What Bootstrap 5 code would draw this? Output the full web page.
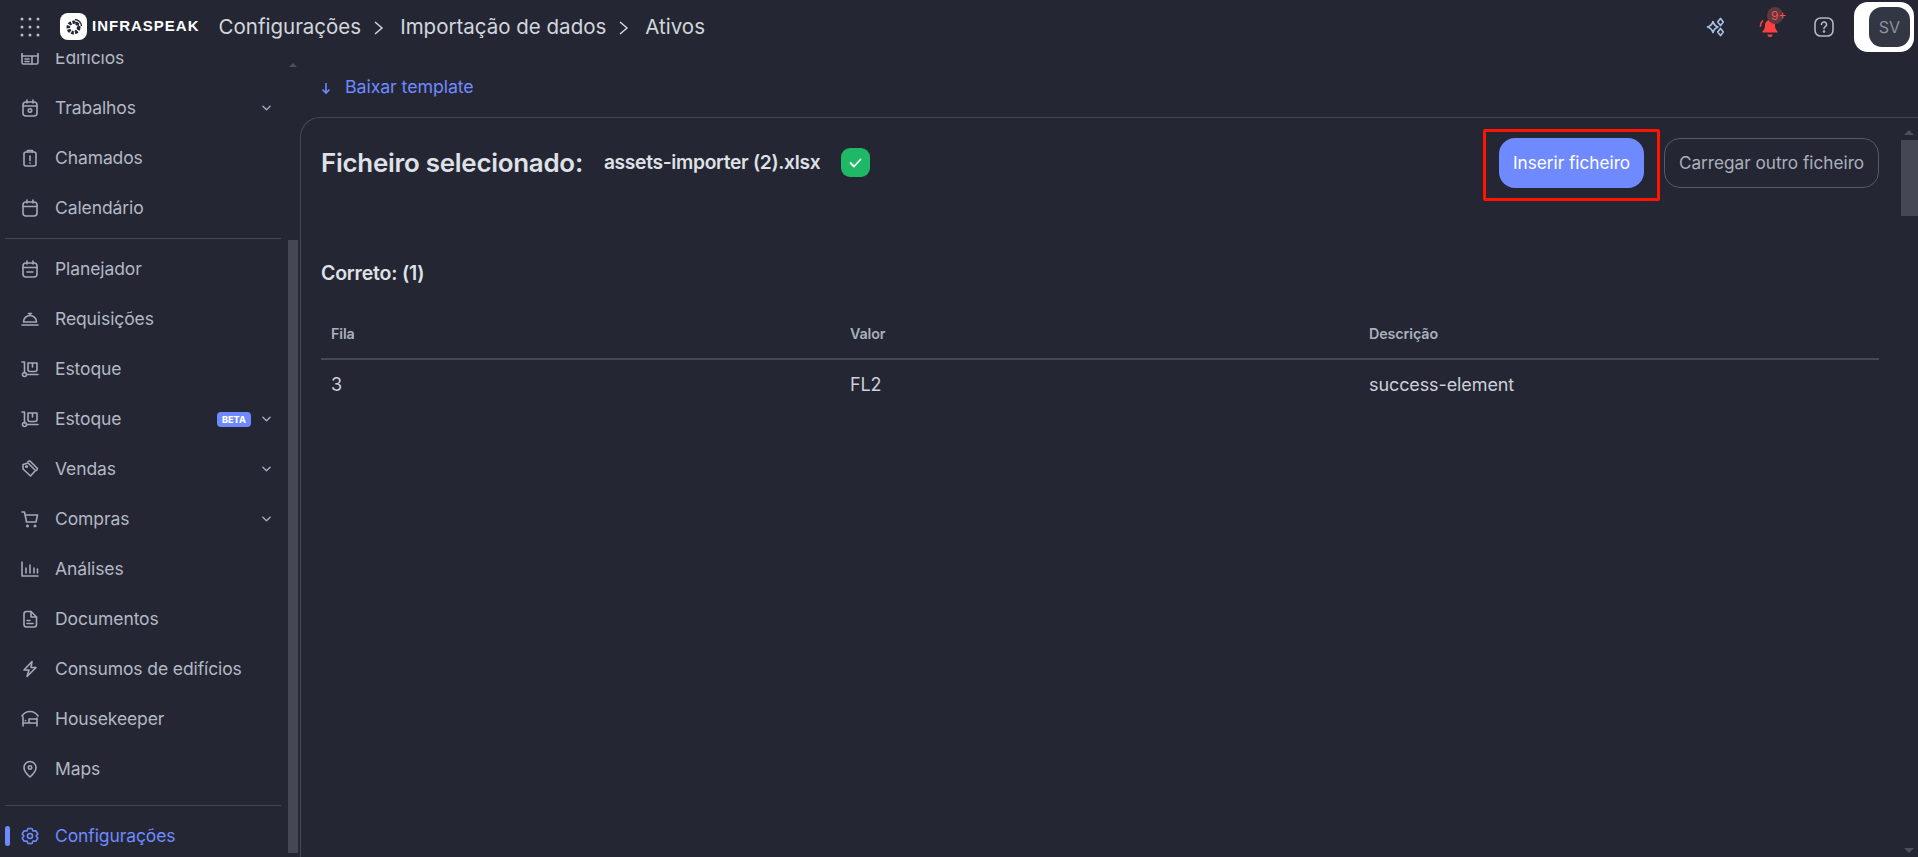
<!DOCTYPE html>
<html lang="pt">
<head>
<meta charset="utf-8">
<title>Infraspeak</title>
<link href="https://cdn.jsdelivr.net/npm/bootstrap@5.3.0/dist/css/bootstrap.min.css" rel="stylesheet">
<style>
html,body{height:100%;overflow:hidden}
body{background:#242733;color:#c6c9d2;font-family:Inter,"Liberation Sans",sans-serif;letter-spacing:-.1px}
svg{display:block;flex:none}
.ic{width:20px;height:20px;fill:none;stroke:#a3a9b8;stroke-width:1.6;stroke-linecap:round;stroke-linejoin:round}
.topbar{height:53px;padding-left:19px;position:relative;z-index:2;background:#242733}
.brand-mark{width:27px;height:27px;border-radius:8px;background:#fff;margin-left:19px}
.brand-name{font-family:"Liberation Sans",sans-serif;font-weight:700;font-size:15px;color:#fff;letter-spacing:1px;margin-left:5px;margin-right:19px}
.crumb{font-size:20.5px;color:#d3d6dd;letter-spacing:0;margin-top:2px}
.crumb-sep{width:10px;height:16px;margin:2px 16px 0 13px;fill:none;stroke:#d3d6dd;stroke-width:1.5}
.top-tools{margin-left:auto}
.tool-wrap{position:relative;width:24px;height:24px}
.notif-dot{position:absolute;left:9px;top:-8px;width:16px;height:17px;border-radius:50%;background:#5a3a40;color:#ff4b4b;font-size:12px;line-height:17px;padding-left:4px;letter-spacing:0;white-space:nowrap}
.avatar-box{width:60px;height:50px;background:#fff;border-radius:14px;margin-left:19px;margin-right:4px;padding-left:15px;padding-right:4px}
.avatar-in{width:41px;height:40px;border-radius:13px;background:#333643;color:#8d92a1;font-size:16px;letter-spacing:.2px}
.shell{height:804px}
.side{width:300px;flex:none;position:relative;overflow:hidden}
.side-inner{margin-top:-20px;padding-left:5px;width:282px}
.side-row{height:50px;display:flex;align-items:center;padding-left:15px;font-size:17.5px;color:#b3b8c4;position:relative}
.side-row .ic{margin-right:15px}
.side-arrow{width:9px;height:6px;fill:none;stroke:#a3a9b8;stroke-width:1.6;margin-left:auto;margin-right:11px;stroke-linecap:round;stroke-linejoin:round}
.beta{margin-left:auto;background:#6f8aff;color:#fff;font-size:9px;font-weight:800;border-radius:4px;padding:0 5px;height:15px;line-height:15px;letter-spacing:.1px}
.beta + .side-arrow{margin-left:11px}
.side-rule{height:1px;background:#454854;margin:5px 0;width:276px}
.side-rule.is-low{margin-top:11px}
.side-row.is-on{color:#6f8aff}
.side-row.is-on .ic{stroke:#6f8aff}
.side-row.is-on::before{content:"";position:absolute;left:0;top:15px;width:5px;height:20px;border-radius:3px;background:#6f8aff}
.bar-track{position:absolute;left:288px;top:187px;width:10px;height:613px;background:#454854}
.bar-up{position:absolute;left:289px;top:10px;border:4px solid transparent;border-top:0;border-bottom:4px solid #4b4f5b}
.main-col{min-width:0;padding-right:0}
.dl-link{height:64px;padding:5px 0 0 20px;color:#6f8aff;font-size:17.8px;text-decoration:none}
.dl-link svg{width:12px;height:14px;fill:none;stroke:#6f8aff;stroke-width:1.6;margin-right:13px}
.panel{height:740px;border:1px solid #454854;border-right:0;border-bottom:0;border-radius:20px 0 0 0;padding:0 39px 0 20px;position:relative}
.panel-head{height:89px}
.panel-title{font-size:25.9px;font-weight:600;color:#dfe1e6;margin:0 21px 0 0;letter-spacing:-.25px}
.file-name{font-size:19.2px;font-weight:600;color:#dfe1e6;letter-spacing:-.3px}
.ok-badge{width:29px;height:29px;border-radius:9px;background:#1fb866;margin-left:21px}
.btn-go,.btn-go:hover{background:#6f8aff;color:#fff;border:0;border-radius:16px;height:50px;width:145px;font-size:17.2px;padding:0}
.btn-other,.btn-other:hover{background:transparent;color:#aab0bd;border:1px solid #575a66;border-radius:16px;height:50px;width:215px;font-size:17.2px;padding:0;margin-left:20px}
.red-frame{position:absolute;left:1182px;top:11px;width:177px;height:72px;border:3px solid #ff1500;border-radius:2px;pointer-events:none}
.ok-title{font-size:19.5px;font-weight:600;color:#dfe1e6;margin:51px 0 21px;letter-spacing:-.2px;line-height:30px}
.sheet{margin:0;color:#cdd0d8;--bs-table-bg:transparent;--bs-table-color:#cdd0d8;border-color:#454854}
.sheet th{font-size:14.3px;font-weight:600;color:#aab0bd;padding:0 10px;height:50px;border-bottom:2px solid #454854;vertical-align:middle}
.sheet td{font-size:18px;padding:0 10px;height:50px;border:0;vertical-align:middle}
.col-a{width:519px}
.panel-track{position:absolute;right:0;top:22px;width:17px;height:76px;background:#454854}
.panel-up{position:absolute;right:4px;top:12px;border:5px solid transparent;border-top:0;border-bottom:5px solid #4b4f5b}
.panel-down{position:absolute;right:4px;bottom:4px;border:5px solid transparent;border-bottom:0;border-top:5px solid #4b4f5b}
</style>
</head>
<body>
<header class="topbar d-flex align-items-center">
  <svg width="22" height="22" viewBox="0 0 22 22" fill="#b9bdc8"><circle cx="3" cy="3" r="1.5"/><circle cx="11" cy="3" r="1.5"/><circle cx="19" cy="3" r="1.5"/><circle cx="3" cy="11" r="1.5"/><circle cx="11" cy="11" r="1.5"/><circle cx="19" cy="11" r="1.5"/><circle cx="3" cy="19" r="1.5"/><circle cx="11" cy="19" r="1.5"/><circle cx="19" cy="19" r="1.5"/></svg>
  <span class="brand-mark d-flex align-items-center justify-content-center">
    <svg width="20" height="20" viewBox="0 0 20 20"><circle cx="9.5" cy="10.5" r="5.2" fill="none" stroke="#242733" stroke-width="3.6" stroke-dasharray="2.6 1.2"/><path d="M11 2.5a7 7 0 0 1 6.5 6.5M11 5.5a4 4 0 0 1 3.5 3.5" fill="none" stroke="#242733" stroke-width="1.3"/></svg>
  </span>
  <span class="brand-name">INFRASPEAK</span>
  <span class="crumb">Configurações</span>
  <svg class="crumb-sep" viewBox="0 0 10 16"><path d="M1 2l7 6-7 6"/></svg>
  <span class="crumb">Importação de dados</span>
  <svg class="crumb-sep" viewBox="0 0 10 16"><path d="M1 2l7 6-7 6"/></svg>
  <span class="crumb">Ativos</span>
  <div class="top-tools d-flex align-items-center">
    <svg width="20" height="20" viewBox="0 0 20 20" fill="none" stroke="#a9bfe0" stroke-width="1.7" stroke-linejoin="round" style="margin-right:32px"><path d="M7 4.500c.8 2.800 2.200 4.600 5 5.500-2.800.9-4.200 2.700-5 5.500-.8-2.800-2.700-4.600-5.500-5.500 2.800-.9 4.700-2.700 5.500-5.500z"/><path d="M14.500 1.500l2.800 3.500-2.800 3.500-2.800-3.500zM14.500 11.500l2.800 3.500-2.800 3.500-2.800-3.500z"/></svg>
    <div class="tool-wrap" style="margin-right:31px">
      <svg width="24" height="24" viewBox="0 0 24 24" fill="#ff4040"><path d="M12 5a5 5 0 0 0-5 5c0 4-1.500 5-2.500 6.500v1h15v-1C18.500 15 17 14 17 10a5 5 0 0 0-5-5z"/><path d="M9.500 19.500h5a2.500 2.500 0 0 1-5 0z"/><path d="M2.500 11c0-2 .6-3.500 2-5" fill="none" stroke="#ff4040" stroke-width="1.700" stroke-linecap="round"/></svg>
      <span class="notif-dot">9+</span>
    </div>
    <svg width="22" height="22" viewBox="0 0 22 22" fill="none" stroke="#b3b8c4" stroke-width="1.600"><rect x="2" y="2" width="18" height="18" rx="5.500"/><path d="M8.500 8.500a2.500 2.500 0 1 1 3.800 2.100c-.8.500-1.300 1-1.300 2" stroke-linecap="round"/><circle cx="11" cy="15.500" r=".5" fill="#b3b8c4"/></svg>
    <div class="avatar-box d-flex align-items-center"><div class="avatar-in d-flex align-items-center justify-content-center">SV</div></div>
  </div>
</header>
<div class="shell d-flex">
  <nav class="side">
    <div class="side-inner">
      <div class="side-row"><svg class="ic" viewBox="0 0 20 20"><rect x="2" y="4" width="16" height="12" rx="1.500"/><path d="M2 8h16M5 11h4M5 13.500h4M12 8v8"/></svg>Edifícios</div>
      <div class="side-row"><svg class="ic" viewBox="0 0 20 20"><rect x="3" y="4" width="14" height="14" rx="3"/><path d="M3 8h14M7 2v3M13 2v3"/><circle cx="10" cy="12.500" r="1.700"/></svg>Trabalhos<svg class="side-arrow" viewBox="0 0 10 6"><path d="M1 1l4 4 4-4"/></svg></div>
      <div class="side-row"><svg class="ic" viewBox="0 0 20 20"><rect x="4" y="4" width="12" height="14" rx="2"/><path d="M7.500 4V2.500h5V4M10 8v4.500M10 15v.2"/></svg>Chamados</div>
      <div class="side-row"><svg class="ic" viewBox="0 0 20 20"><rect x="3" y="4" width="14" height="14" rx="3"/><path d="M3 8.500h14M7 2v3M13 2v3"/></svg>Calendário</div>
      <div class="side-rule"></div>
      <div class="side-row"><svg class="ic" viewBox="0 0 20 20"><rect x="3" y="4" width="14" height="14" rx="3"/><path d="M3 8.500h14M7 2v3M13 2v3M7 13h6"/></svg>Planejador</div>
      <div class="side-row"><svg class="ic" viewBox="0 0 20 20"><path d="M3.500 13a6.500 6.500 0 0 1 13 0zM10 6.500V4.500M8.500 4.500h3M2 16h16"/></svg>Requisições</div>
      <div class="side-row"><svg class="ic" viewBox="0 0 20 20"><path d="M2 3h2.500v11M7 15.500h11"/><circle cx="4.500" cy="15.500" r="2"/><path d="M8 4h9v6.500a2 2 0 0 1-2 2h-5a2 2 0 0 1-2-2zM12.500 4v4"/></svg>Estoque</div>
      <div class="side-row"><svg class="ic" viewBox="0 0 20 20"><path d="M2 3h2.500v11M7 15.500h11"/><circle cx="4.500" cy="15.500" r="2"/><path d="M8 4h9v6.500a2 2 0 0 1-2 2h-5a2 2 0 0 1-2-2zM12.500 4v4"/></svg>Estoque<span class="beta">BETA</span><svg class="side-arrow" viewBox="0 0 10 6"><path d="M1 1l4 4 4-4"/></svg></div>
      <div class="side-row"><svg class="ic" viewBox="0 0 20 20"><path d="M3 5.500l5-1.500 7.500 7.500-5 5.500L3 10z"/><path d="M8 2.500l2-.5 7.500 7.500-1 2"/><circle cx="6.500" cy="7.500" r=".8"/></svg>Vendas<svg class="side-arrow" viewBox="0 0 10 6"><path d="M1 1l4 4 4-4"/></svg></div>
      <div class="side-row"><svg class="ic" viewBox="0 0 20 20"><path d="M2 3h2.500l2 10h9.500l1.500-7H5"/><circle cx="7.500" cy="17" r=".7"/><circle cx="15" cy="17" r=".7"/></svg>Compras<svg class="side-arrow" viewBox="0 0 10 6"><path d="M1 1l4 4 4-4"/></svg></div>
      <div class="side-row"><svg class="ic" viewBox="0 0 20 20"><path d="M2 3v14h16M6 9v5M10 6v8M14 9v5M17.500 10v4"/></svg>Análises</div>
      <div class="side-row"><svg class="ic" viewBox="0 0 20 20"><path d="M4 5a2.500 2.500 0 0 1 2.500-2.500H11L16.500 8v7.500A2.500 2.500 0 0 1 14 18H6.500A2.500 2.500 0 0 1 4 15.500z"/><path d="M11 2.500V8h5.500M7 11.500h3M7 14.500h6"/></svg>Documentos</div>
      <div class="side-row"><svg class="ic" viewBox="0 0 20 20"><path d="M12 2.500L4 11h5l-2 6.500 9-9h-5z"/></svg>Consumos de edifícios</div>
      <div class="side-row"><svg class="ic" viewBox="0 0 20 20"><path d="M2 7c2-3 5-4.500 8-4.500S16 4 18 7M3 8v9M17 9v8M3 14h14M9 14v-4h6.500a1.500 1.500 0 0 1 1.500 1.500M5.500 11.500v.2"/></svg>Housekeeper</div>
      <div class="side-row"><svg class="ic" viewBox="0 0 20 20"><path d="M10 18c-4-3.500-6-6.500-6-9.500a6 6 0 0 1 12 0c0 3-2 6-6 9.500z"/><circle cx="10" cy="8.500" r="1.700"/></svg>Maps</div>
      <div class="side-rule is-low"></div>
      <div class="side-row is-on"><svg class="ic" viewBox="0 0 20 20"><path d="M8 2.500h4l1 2.500 2.800-.3 2 3.300-1.700 2 1.700 2-2 3.300-2.800-.3-1 2.500H8l-1-2.500-2.800.3-2-3.300 1.700-2-1.700-2 2-3.300 2.800.3z"/><circle cx="10" cy="10" r="2.500"/></svg>Configurações</div>
    </div>
    <div class="bar-up"></div>
    <div class="bar-track"></div>
  </nav>
  <main class="main-col flex-grow-1">
    <a class="dl-link d-flex align-items-center" href="#"><svg viewBox="0 0 12 14"><path d="M6 2v10M2.500 8.500L6 12l3.500-3.500"/></svg>Baixar template</a>
    <section class="panel">
      <div class="panel-head d-flex align-items-center">
        <h2 class="panel-title">Ficheiro selecionado:</h2>
        <span class="file-name">assets-importer (2).xlsx</span>
        <span class="ok-badge d-flex align-items-center justify-content-center"><svg width="13" height="10" viewBox="0 0 13 10" fill="none" stroke="#fff" stroke-width="1.800" stroke-linecap="round" stroke-linejoin="round"><path d="M1.500 5l3.500 3.500 6.500-7"/></svg></span>
        <button class="btn btn-go ms-auto" type="button">Inserir ficheiro</button>
        <button class="btn btn-other" type="button">Carregar outro ficheiro</button>
      </div>
      <h3 class="ok-title">Correto: (1)</h3>
      <table class="table sheet">
        <thead><tr><th class="col-a">Fila</th><th class="col-a">Valor</th><th>Descrição</th></tr></thead>
        <tbody><tr><td>3</td><td>FL2</td><td>success-element</td></tr></tbody>
      </table>
      <div class="red-frame"></div>
      <div class="panel-up"></div>
      <div class="panel-track"></div>
      <div class="panel-down"></div>
    </section>
  </main>
</div>
<script src="https://cdn.jsdelivr.net/npm/bootstrap@5.3.0/dist/js/bootstrap.bundle.min.js"></script>
</body>
</html>
